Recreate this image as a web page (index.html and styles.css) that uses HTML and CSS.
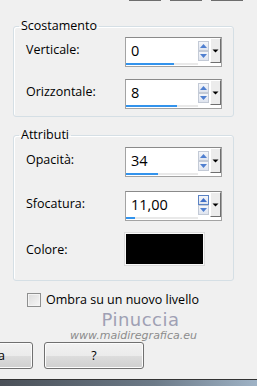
FILE: index.html
```html
<!DOCTYPE html>
<html lang="it">
<head>
    <meta charset="UTF-8">
    <title>Sfalsa ombra</title>
    <link rel="stylesheet" href="styles.css">
</head>
<body>

<!-- bordi dei pulsanti sopra -->
<div class="top-edges">
    <span></span><span></span><span></span>
</div>

<!-- Scostamento -->
<fieldset class="group group-offset">
    <legend>Scostamento</legend>
    <div class="row">
        <label>Verticale:</label>
        <div class="spin">
            <div class="field">
                <div class="value">0</div>
                <div class="track"><div class="bar" style="width: 66%"></div></div>
            </div>
            <div class="arrows">
                <div class="arrow"><svg width="9" height="8" viewBox="0 0 9 8"><path d="M1 6h7L4.5 2z" fill="#4f7fd0"/></svg></div>
                <div class="arrow"><svg width="9" height="8" viewBox="0 0 9 8"><path d="M1 2h7L4.5 6z" fill="#4f7fd0"/></svg></div>
            </div>
            <div class="drop"><svg width="9" height="6" viewBox="0 0 9 6"><path d="M1.5 1.5h6L4.5 4.5z" fill="#000"/></svg></div>
        </div>
    </div>
    <div class="row">
        <label>Orizzontale:</label>
        <div class="spin">
            <div class="field">
                <div class="value">8</div>
                <div class="track"><div class="bar" style="width: 71%"></div></div>
            </div>
            <div class="arrows">
                <div class="arrow"><svg width="9" height="8" viewBox="0 0 9 8"><path d="M1 6h7L4.5 2z" fill="#4f7fd0"/></svg></div>
                <div class="arrow"><svg width="9" height="8" viewBox="0 0 9 8"><path d="M1 2h7L4.5 6z" fill="#4f7fd0"/></svg></div>
            </div>
            <div class="drop"><svg width="9" height="6" viewBox="0 0 9 6"><path d="M1.5 1.5h6L4.5 4.5z" fill="#000"/></svg></div>
        </div>
    </div>
</fieldset>

<!-- Attributi -->
<fieldset class="group group-attr">
    <legend>Attributi</legend>
    <div class="row">
        <label>Opacità:</label>
        <div class="spin">
            <div class="field">
                <div class="value">34</div>
                <div class="track"><div class="bar" style="width: 44%"></div></div>
            </div>
            <div class="arrows">
                <div class="arrow"><svg width="9" height="8" viewBox="0 0 9 8"><path d="M1 6h7L4.5 2z" fill="#4f7fd0"/></svg></div>
                <div class="arrow"><svg width="9" height="8" viewBox="0 0 9 8"><path d="M1 2h7L4.5 6z" fill="#4f7fd0"/></svg></div>
            </div>
            <div class="drop"><svg width="9" height="6" viewBox="0 0 9 6"><path d="M1.5 1.5h6L4.5 4.5z" fill="#000"/></svg></div>
        </div>
    </div>
    <div class="row">
        <label>Sfocatura:</label>
        <div class="spin">
            <div class="field">
                <div class="value">11,00</div>
                <div class="track"><div class="bar" style="width: 12%"></div></div>
            </div>
            <div class="arrows">
                <div class="arrow arrow-hot"><svg width="9" height="8" viewBox="0 0 9 8"><path d="M1 6h7L4.5 2z" fill="#3f6fc8"/></svg></div>
                <div class="arrow"><svg width="9" height="8" viewBox="0 0 9 8"><path d="M1 2h7L4.5 6z" fill="#4f7fd0"/></svg></div>
            </div>
            <div class="drop"><svg width="9" height="6" viewBox="0 0 9 6"><path d="M1.5 1.5h6L4.5 4.5z" fill="#000"/></svg></div>
        </div>
    </div>
    <div class="row row-color">
        <label>Colore:</label>
        <div class="swatch"></div>
    </div>
</fieldset>

<!-- opzione -->
<label class="check">
    <span class="box"></span>
    Ombra su un nuovo livello
</label>

<!-- firma -->
<div class="mark">
    <div class="mark-name">Pinuccia</div>
    <div class="mark-site">www.maidiregrafica.eu</div>
</div>

<!-- pulsanti -->
<div class="buttons">
    <button class="btn">Annulla</button>
    <button class="btn">?</button>
</div>

<div class="frame"></div>

</body>
</html>
```

FILE: styles.css
```css
body {
    margin: 0;
    width: 257px;
    height: 386px;
    overflow: hidden;
    background-color: #f0f0f0;
    font-family: "Open Sans", "Noto Sans", sans-serif;
    font-size: 12px;
    color: #000;
    display: flex;
    flex-direction: column;
}
.top-edges {
    display: flex;
    gap: 9px;
    height: 1px;
    margin-left: 129px;
}
.top-edges span {
    width: 32px;
    background-color: #6d6d6d;
}

/* gruppi */
.group {
    margin: 17px 0 0 13px;
    width: 221px;
    padding: 3px 0 7px 12px;
    box-sizing: border-box;
    border: 1px solid #d5dfe5;
    border-radius: 3px;
    box-shadow: inset 1px 1px 0 #fff;
    display: flex;
    flex-direction: column;
    gap: 12px;
}
.group legend {
    padding: 0 2px;
    margin-left: -7px;
    line-height: 16px;
    font-size: 12.5px;
}
.group-attr {
    margin-top: 10px;
    padding-top: 4px;
    padding-bottom: 15px;
    gap: 14px;
}
.row {
    display: flex;
    align-items: center;
    height: 30px;
}
.row label {
    width: 99px;
    padding-bottom: 5px;
    font-size: 12.5px;
}
.row-color {
    margin-top: -2px;
    height: 32px;
}
.row-color label {
    padding-bottom: 0;
}

/* campo numerico */
.spin {
    display: flex;
    width: 97px;
    height: 30px;
    box-sizing: border-box;
    border: 1px solid #a3a3a3;
    border-top-color: #8a8a8a;
    background-color: #fff;
}
.field {
    flex: 1;
    display: flex;
    flex-direction: column;
}
.value {
    flex: 1;
    padding-left: 5px;
    font-size: 14.5px;
    line-height: 25px;
}
.track {
    height: 3px;
    margin-bottom: 1px;
    background-color: #e9e9e9;
}
.bar {
    height: 100%;
    background-color: #3393ec;
}
.arrows {
    display: flex;
    flex-direction: column;
    padding-top: 3px;
}
.arrow {
    width: 11px;
    height: 10px;
    box-sizing: border-box;
    border: 1px solid #c3cad6;
    background: linear-gradient(#f4f6fa, #dfe4ee);
    display: flex;
    align-items: center;
    justify-content: center;
    overflow: hidden;
}
.arrow-hot {
    border-color: #5b83c4;
}
.drop {
    width: 11px;
    height: 25px;
    box-sizing: border-box;
    margin-left: 1px;
    border-left: 1px solid #fff;
    border-top: 1px solid #fff;
    border-right: 1px solid #6f6f6f;
    border-bottom: 1px solid #6f6f6f;
    background-color: #ececec;
    display: flex;
    align-items: center;
    justify-content: center;
}
.swatch {
    width: 79px;
    height: 32px;
    box-sizing: border-box;
    border: 1px solid #fafafa;
    outline: 1px solid #dcdcdc;
    background-color: #000;
}

/* casella */
.check {
    display: flex;
    align-items: center;
    gap: 5px;
    margin: 10px 0 0 27px;
    font-size: 12.5px;
}
.check .box {
    width: 14px;
    height: 14px;
    box-sizing: border-box;
    border: 1px solid #8e8f8f;
    background: linear-gradient(135deg, #dcdcdc, #f6f6f6);
    box-shadow: inset 0 0 0 1px #f4f4f4;
}

/* firma */
.mark {
    margin: 2px 0 0 73px;
    width: 121px;
    display: flex;
    flex-direction: column;
    align-items: center;
    font-family: "DejaVu Sans", sans-serif;
}
.mark-name {
    margin-left: 14px;
    font-size: 18px;
    line-height: 20px;
    color: #9fa0b4;
    letter-spacing: 0.5px;
}
.mark-site {
    font-size: 11px;
    line-height: 12px;
    font-style: italic;
    color: #8c8c8c;
}

/* pulsanti */
.buttons {
    display: flex;
    gap: 11px;
    margin: 0 0 0 -67px;
}
.btn {
    width: 100px;
    height: 27px;
    border: 1px solid #707070;
    border-radius: 3px;
    background: linear-gradient(#f2f2f2 0%, #ebebeb 50%, #dddddd 51%, #cfcfcf 100%);
    box-shadow: inset 0 0 0 1px #fcfcfc;
    font-family: "Open Sans", "Noto Sans", sans-serif;
    font-size: 12.5px;
    color: #000;
    padding: 0;
}
.frame {
    margin-top: auto;
    height: 6px;
    border-top: 1px solid #333;
    background: linear-gradient(90deg, #4a5058, #6c7a88 60%, #9fb3c6);
}
```
